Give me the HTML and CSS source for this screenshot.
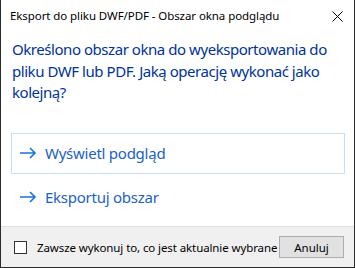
FILE: index.html
```html
<!doctype html>
<html lang="pl">
  <head>
    <meta charset="UTF-8" />
    <title>Eksport do pliku DWF/PDF - Obszar okna podglądu</title>
    <link rel="stylesheet" href="styles.css">
  </head>
  <body>
    <div class="dialog">
      <div class="titlebar">
        <span class="title">Eksport do pliku DWF/PDF - Obszar okna podglądu</span>
        <svg class="close" width="11" height="11" viewBox="0 0 11 11">
          <path d="M0.5 0.5 L10.5 10.5 M10.5 0.5 L0.5 10.5" stroke="#000" stroke-width="1" fill="none" />
        </svg>
      </div>
      <div class="content">
        <p class="instruction">Określono obszar okna do wyeksportowania do pliku DWF lub PDF. Jaką operację wykonać jako kolejną?</p>
        <div class="links">
          <div class="cmd-link active">
            <svg class="arrow" width="18" height="12" viewBox="0 0 18 12">
              <path d="M1 6 H16 M11 1 L16 6 L11 11" stroke="#1a73d9" stroke-width="1.6" fill="none" />
            </svg>
            <span>Wyświetl podgląd</span>
          </div>
          <div class="cmd-link">
            <svg class="arrow" width="18" height="12" viewBox="0 0 18 12">
              <path d="M1 6 H16 M11 1 L16 6 L11 11" stroke="#1a73d9" stroke-width="1.6" fill="none" />
            </svg>
            <span>Eksportuj obszar</span>
          </div>
        </div>
      </div>
      <div class="footer">
        <label class="check">
          <span class="box"></span>
          <span>Zawsze wykonuj to, co jest aktualnie wybrane</span>
        </label>
        <button class="cancel">Anuluj</button>
      </div>
    </div>
  </body>
</html>
```

FILE: styles.css
```css
body {
  margin: 0;
  font-family: "Noto Sans", "Open Sans", sans-serif;
  background: #fff;
}
.dialog {
  box-sizing: border-box;
  width: 355px;
  height: 268px;
  border-left: 1px solid #2b2b2b;
  border-right: 1px solid #2b2b2b;
  border-bottom: 1px solid #2b2b2b;
  display: flex;
  flex-direction: column;
  background: #fff;
}
.titlebar {
  height: 31px;
  display: flex;
  align-items: center;
  padding: 0 11px 0 9px;
  justify-content: space-between;
  flex-shrink: 0;
}
.title {
  font-size: 11.5px;
  letter-spacing: -0.08px;
  color: #000;
}
.close {
  margin-top: 1px;
}
.content {
  flex: 1;
  padding: 0 9px 0 10px;
}
.instruction {
  margin: 8px 0 0 1px;
  font-size: 15px;
  line-height: 21.5px;
  letter-spacing: -0.45px;
  color: #003399;
}
.links {
  margin-top: 29px;
  display: flex;
  flex-direction: column;
  gap: 3px;
}
.cmd-link {
  height: 39px;
  display: flex;
  align-items: center;
  gap: 8px;
  padding-left: 7px;
  border: 1px solid transparent;
  font-size: 15px;
  letter-spacing: -0.25px;
  color: #1a62c7;
}
.cmd-link.active {
  border-color: #c4e0f7;
}
.footer {
  height: 40px;
  flex-shrink: 0;
  background: #f0f0f0;
  border-top: 1px solid #dfdfdf;
  display: flex;
  align-items: center;
  justify-content: space-between;
  padding: 0 10px 0 13px;
}
.check {
  display: flex;
  align-items: center;
  gap: 10px;
  font-size: 11.5px;
  letter-spacing: -0.1px;
  white-space: nowrap;
  color: #000;
}
.box {
  width: 11px;
  height: 11px;
  border: 1px solid #333;
  background: #fff;
}
.cancel {
  width: 65px;
  height: 22px;
  flex-shrink: 0;
  background: #e1e1e1;
  border: 1px solid #adadad;
  font-family: inherit;
  font-size: 11.5px;
  color: #000;
  padding: 0;
}
```
